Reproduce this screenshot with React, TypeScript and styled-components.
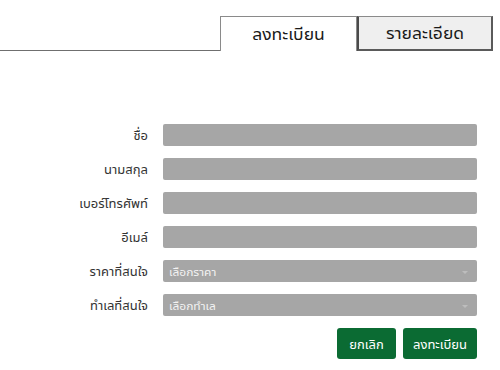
import React from "react";
import styled, { createGlobalStyle } from "styled-components";

const Global = createGlobalStyle`
  html, body { margin: 0; padding: 0; background: #fff; }
  body { font-family: "Noto Sans Thai UI", "Noto Sans Thai", "Leelawadee UI", Tahoma, "Noto Sans", "DejaVu Sans", sans-serif; color: #333; }
  * { box-sizing: border-box; }
`;

const Page = styled.div`
  width: 500px;
  height: 370px;
  padding-top: 16px;
`;

const TabBar = styled.div`
  display: flex;
  align-items: flex-end;
  height: 35px;
  padding-right: 7px;
`;

const TabLine = styled.div`
  flex: 1;
  height: 1px;
  background: #6f6f6f;
`;

const Tab = styled.div<{ $active?: boolean }>`
  width: ${(p) => (p.$active ? "137px" : "136px")};
  height: 35px;
  display: flex;
  align-items: center;
  justify-content: center;
  font-size: 17.5px;
  color: #1a1a1a;
  background: ${(p) => (p.$active ? "#fff" : "#efefef")};
  border-top: 1px solid #8a8a8a;
  border-left: ${(p) => (p.$active ? "1px solid #8a8a8a" : "2px solid #4a4a4a")};
  border-right: ${(p) => (p.$active ? "1px solid #8a8a8a" : "2px solid #5a5a5a")};
  border-bottom: ${(p) => (p.$active ? "none" : "2px solid #5a5a5a")};
  padding-bottom: 2px;
`;

const Form = styled.div`
  margin-top: 73px;
  display: grid;
  grid-template-columns: 148px 314px;
  column-gap: 15px;
  row-gap: 12px;
`;

const Label = styled.div`
  text-align: right;
  font-size: 13px;
  color: #333;
  line-height: 22px;
`;

const Input = styled.div`
  height: 22px;
  background: #a6a6a6;
  border-radius: 2px;
`;

const Select = styled(Input)`
  display: flex;
  align-items: center;
  justify-content: space-between;
  padding: 0 9px 0 6px;
  font-size: 12px;
  color: #f2f2f2;
`;

const Caret = styled.span`
  width: 0;
  height: 0;
  border-left: 3px solid transparent;
  border-right: 3px solid transparent;
  border-top: 3px solid #bdbdbd;
  margin-top: 2px;
`;

const Actions = styled.div`
  display: flex;
  justify-content: flex-end;
  gap: 7px;
  margin-top: 12px;
  width: 477px;
`;

const Button = styled.button<{ $w: number }>`
  width: ${(p) => p.$w}px;
  height: 31px;
  border: none;
  border-radius: 3px;
  background: #0b6b33;
  color: #fff;
  font-family: inherit;
  font-size: 13px;
  padding: 0;
`;

const fields = ["ชื่อ", "นามสกุล", "เบอร์โทรศัพท์", "อีเมล์"];

export default function App() {
  return (
    <Page>
      <Global />
      <TabBar>
        <TabLine />
        <Tab $active>ลงทะเบียน</Tab>
        <Tab>รายละเอียด</Tab>
      </TabBar>
      <Form>
        {fields.map((f) => (
          <React.Fragment key={f}>
            <Label>{f}</Label>
            <Input />
          </React.Fragment>
        ))}
        <Label>ราคาที่สนใจ</Label>
        <Select>
          <span>เลือกราคา</span>
          <Caret />
        </Select>
        <Label>ทำเลที่สนใจ</Label>
        <Select>
          <span>เลือกทำเล</span>
          <Caret />
        </Select>
      </Form>
      <Actions>
        <Button $w={59}>ยกเลิก</Button>
        <Button $w={74}>ลงทะเบียน</Button>
      </Actions>
    </Page>
  );
}
